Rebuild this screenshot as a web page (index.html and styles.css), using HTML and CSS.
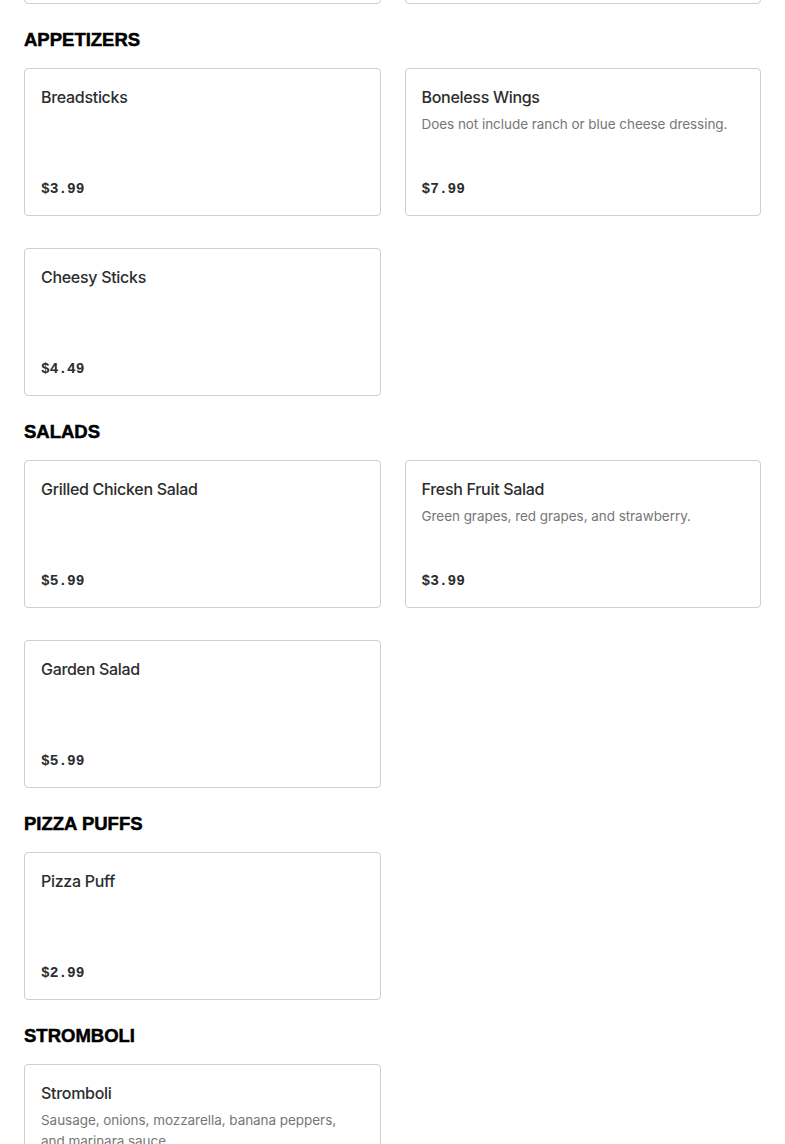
FILE: index.html
```html
<!DOCTYPE html>
<html lang="en">
<head>
<meta charset="utf-8">
<title>Menu</title>
<link rel="stylesheet" href="styles.css">
</head>
<body>
<main class="menu">
  <section class="section section-prev">
    <div class="grid">
      <div class="card"></div>
      <div class="card"></div>
    </div>
  </section>

  <section class="section">
    <h2 class="section-title">APPETIZERS</h2>
    <div class="grid">
      <div class="card">
        <div class="card-body"><h3 class="item-name">Breadsticks</h3></div>
        <div class="price">$3.99</div>
      </div>
      <div class="card">
        <div class="card-body"><h3 class="item-name">Boneless Wings</h3><p class="item-desc">Does not include ranch or blue cheese dressing.</p></div>
        <div class="price">$7.99</div>
      </div>
      <div class="card">
        <div class="card-body"><h3 class="item-name">Cheesy Sticks</h3></div>
        <div class="price">$4.49</div>
      </div>
    </div>
  </section>

  <section class="section">
    <h2 class="section-title">SALADS</h2>
    <div class="grid">
      <div class="card">
        <div class="card-body"><h3 class="item-name">Grilled Chicken Salad</h3></div>
        <div class="price">$5.99</div>
      </div>
      <div class="card">
        <div class="card-body"><h3 class="item-name">Fresh Fruit Salad</h3><p class="item-desc">Green grapes, red grapes, and strawberry.</p></div>
        <div class="price">$3.99</div>
      </div>
      <div class="card">
        <div class="card-body"><h3 class="item-name">Garden Salad</h3></div>
        <div class="price">$5.99</div>
      </div>
    </div>
  </section>

  <section class="section">
    <h2 class="section-title">PIZZA PUFFS</h2>
    <div class="grid">
      <div class="card">
        <div class="card-body"><h3 class="item-name">Pizza Puff</h3></div>
        <div class="price">$2.99</div>
      </div>
    </div>
  </section>

  <section class="section">
    <h2 class="section-title">STROMBOLI</h2>
    <div class="grid">
      <div class="card">
        <div class="card-body"><h3 class="item-name">Stromboli</h3><p class="item-desc">Sausage, onions, mozzarella, banana peppers, and marinara sauce.</p></div>
        <div class="price">$8.99</div>
      </div>
    </div>
  </section>
</main>
</body>
</html>
```
FILE: styles.css
```css
html, body {
  margin: 0;
  padding: 0;
  background: #ffffff;
}
body {
  font-family: Inter, "Liberation Sans", sans-serif;
  color: #2d2d2d;
}
.menu {
  padding: 0 24px;
}
.section {
  margin-bottom: 24px;
}
.section-prev {
  margin-top: -144px;
}
.section-title {
  margin: 0 0 16px;
  font-family: "Liberation Sans", Arial, sans-serif;
  font-weight: 700;
  font-size: 18.5px;
  line-height: 24px;
  color: #000;
  -webkit-text-stroke: 0.5px #000;
}
.grid {
  display: grid;
  grid-template-columns: 1fr 1fr;
  column-gap: 24px;
  row-gap: 32px;
}
.card {
  box-sizing: border-box;
  min-height: 148px;
  border: 1px solid #cfcfcf;
  border-radius: 4px;
  padding: 16px 16px 14px;
  display: flex;
  flex-direction: column;
  justify-content: space-between;
  background: #fff;
}
.item-name {
  margin: 0 0 5px;
  font-size: 16px;
  line-height: 24px;
  font-weight: 500;
  letter-spacing: -0.3px;
  color: #2d2d2d;
}
.item-desc {
  margin: 0 8px 0 0;
  font-size: 13.5px;
  line-height: 21px;
  letter-spacing: -0.05px;
  color: #767676;
}
.price {
  font-family: "Liberation Mono", "DejaVu Sans Mono", monospace;
  font-weight: 700;
  font-size: 14.5px;
  line-height: 24px;
  color: #2d2d2d;
  margin-top: 16px;
}
```
